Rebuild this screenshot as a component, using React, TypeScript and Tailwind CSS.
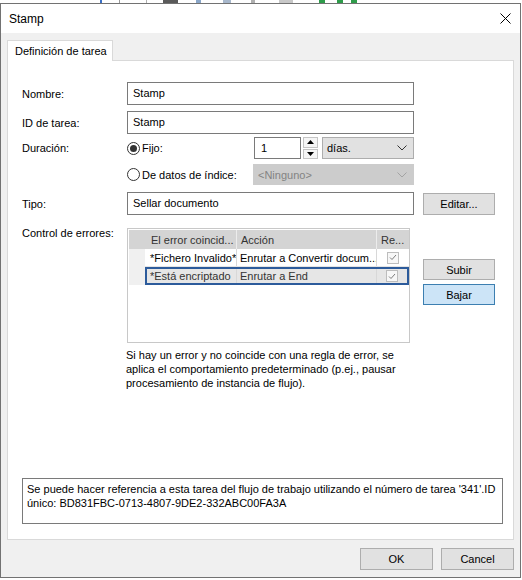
import React from 'react';

const ui = "font-['Liberation_Sans',Arial,sans-serif] text-[11px] leading-[14px] text-black whitespace-nowrap";

const Chevron = ({ color = '#333' }: { color?: string }) => (
  <svg width="10" height="6" viewBox="0 0 10 6">
    <path d="M0.5 0.5 L5 5 L9.5 0.5" fill="none" stroke={color} strokeWidth="1" />
  </svg>
);

const Radio = ({ checked, label }: { checked?: boolean; label: string }) => (
  <div className="flex items-center">
    <span className="flex h-[13px] w-[13px] items-center justify-center rounded-full border border-[#333] bg-white">
      {checked && <span className="h-[7px] w-[7px] rounded-full bg-[#333]" />}
    </span>
    <span className="ml-[2px]">{label}</span>
  </div>
);

const TextBox = ({ value, className = '' }: { value: string; className?: string }) => (
  <div className={`flex h-[23px] items-center border border-[#7a7a7a] bg-white px-[5px] pb-[1px] ${className}`}>{value}</div>
);

const WinButton = ({ label, active, className = '' }: { label: string; active?: boolean; className?: string }) => (
  <div
    className={`flex items-center justify-center border ${
      active ? 'border-[#3c7fb1] bg-[#cce4f7]' : 'border-[#adadad] bg-[#e1e1e1]'
    } ${className}`}
  >
    {label}
  </div>
);

const Check = () => (
  <span className="flex h-[12px] w-[12px] items-center justify-center border border-[#bdbdbd] bg-[#f7f7f7]">
    <svg width="8" height="7" viewBox="0 0 8 7">
      <path d="M1 3.5 L3 5.5 L7 1" fill="none" stroke="#7d7d7d" strokeWidth="1" />
    </svg>
  </span>
);

type ErrorRule = { match: string; action: string; selected?: boolean };

const rules: ErrorRule[] = [
  { match: '*Fichero Invalido*', action: 'Enrutar a Convertir docum...' },
  { match: '*Está encriptado', action: 'Enrutar a End', selected: true },
];

const ErrorGrid = () => (
  <div className="h-[115px] w-[283px] border border-[#c8c8c8] bg-white pl-[1px] pt-[1px]">
    <div className="flex h-[19px] bg-[#d4d4d4] text-[#333]">
      <div className="w-[16px]" />
      <div className="flex w-[92px] items-center border-r border-[#ececec] pl-[6px]">El error coincid...</div>
      <div className="flex w-[140px] items-center border-r border-[#ececec] pl-[4px]">Acción</div>
      <div className="flex flex-1 items-center pl-[4px]">Re...</div>
    </div>
    {rules.map((r) => (
      <div key={r.match} className="flex h-[18px]">
        <div className="w-[16px] bg-[#f0f0f0]" />
        <div
          className={`flex flex-1 ${
            r.selected ? 'border-2 border-[#2c5b9b] bg-[#e6e6e6] text-[#333]' : 'border-b border-[#e4e4e4] bg-white'
          }`}
        >
          <div
            className={`flex ${r.selected ? 'w-[90px] pl-[3px]' : 'w-[92px] pl-[5px]'} items-center overflow-hidden border-r border-[#d8d8d8]`}
          >
            {r.match}
          </div>
          <div className="flex w-[140px] items-center overflow-hidden border-r border-[#d8d8d8] pl-[3px]">
            {r.action}
          </div>
          <div className="flex flex-1 items-center justify-center">
            <Check />
          </div>
        </div>
      </div>
    ))}
  </div>
);

const App = () => {
  return (
    <div className={`h-[580px] w-[522px] overflow-hidden bg-white ${ui}`}>
      {/* strip of the app behind the dialog */}
      <div className="flex h-[3px] items-end">
        <span className="ml-[100px] h-[3px] w-[2px] bg-[#3a6fc4]" />
        <span className="ml-[17px] h-[3px] w-[1px] bg-[#9a9a9a]" />
        <span className="ml-[26px] h-[3px] w-[1px] bg-[#b0b0b0]" />
        <span className="ml-[16px] h-[3px] w-[15px] bg-[#5a5a5a]" />
        <span className="ml-[18px] h-[3px] w-[5px] bg-[#8aa6c8]" />
        <span className="ml-[22px] h-[3px] w-[8px] bg-[#a8b8cc]" />
        <span className="ml-[20px] h-[3px] w-[4px] bg-[#b0b0b0]" />
        <span className="ml-[24px] h-[3px] w-[14px] bg-[#c8c8c8]" />
        <span className="ml-[26px] h-[3px] w-[6px] bg-[#2e9c4a]" />
        <span className="ml-[12px] h-[3px] w-[6px] bg-[#2e9c4a]" />
        <span className="ml-[8px] h-[3px] w-[6px] bg-[#2e9c4a]" />
      </div>

      <div className="flex h-[575px] w-[521px] flex-col border border-[#727272]">
        {/* title bar */}
        <div className="flex h-[29px] items-center justify-between bg-white pl-[8px] pr-[9px] text-[12px]">
          <span>Stamp</span>
          <svg width="11" height="11" viewBox="0 0 11 11">
            <path d="M0.5 0.5 L10.5 10.5 M10.5 0.5 L0.5 10.5" stroke="#000" strokeWidth="1" />
          </svg>
        </div>

        <div className="flex flex-1 flex-col bg-[#f0f0f0] pl-[6px] pr-[6px] pt-[7px]">
          {/* tab header */}
          <div className="flex">
            <div className="relative z-10 -mb-[1px] flex h-[21px] w-[106px] items-center border border-b-0 border-[#d9d9d9] bg-white pl-[7px]">
              Definición de tarea
            </div>
          </div>

          {/* tab page */}
          <div className="flex h-[480px] w-[507px] flex-col border border-[#d9d9d9] bg-white pl-[14px]">
            <div className="mt-[21px] flex items-center">
              <span className="w-[105px]">Nombre:</span>
              <TextBox value="Stamp" className="w-[287px]" />
            </div>
            <div className="mt-[6px] flex items-center">
              <span className="w-[105px]">ID de tarea:</span>
              <TextBox value="Stamp" className="w-[287px]" />
            </div>

            <div className="mt-[3px] flex items-center">
              <span className="w-[105px]">Duración:</span>
              <div className="w-[127px]">
                <Radio checked label="Fijo:" />
              </div>
              <div className="flex h-[22px] w-[47px] items-center border border-[#7a7a7a] bg-white pl-[6px]">1</div>
              <div className="ml-[2px] flex h-[22px] w-[15px] flex-col gap-[1px]">
                <div className="flex h-[10.5px] items-center justify-center border border-[#c4c4c4] bg-[#f5f5f5]">
                  <svg width="7" height="4" viewBox="0 0 7 4">
                    <path d="M0 4 L3.5 0 L7 4 Z" fill="#000" />
                  </svg>
                </div>
                <div className="flex h-[10.5px] items-center justify-center border border-[#c4c4c4] bg-[#f5f5f5]">
                  <svg width="7" height="4" viewBox="0 0 7 4">
                    <path d="M0 0 L3.5 4 L7 0 Z" fill="#000" />
                  </svg>
                </div>
              </div>
              <div className="ml-[4px] flex h-[22px] w-[92px] items-center justify-between border border-[#adadad] bg-[#e1e1e1] pl-[4px] pr-[6px]">
                <span>días.</span>
                <Chevron />
              </div>
            </div>

            <div className="mt-[5px] flex items-center">
              <span className="w-[105px]" />
              <div className="w-[126px]">
                <Radio label="De datos de índice:" />
              </div>
              <div className="flex h-[21px] w-[161px] items-center justify-between border border-[#cccccc] bg-[#cccccc] pl-[4px] pr-[6px] text-[#838383]">
                <span>&lt;Ninguno&gt;</span>
                <Chevron color="#a3a3a3" />
              </div>
            </div>

            <div className="mt-[7px] flex items-center">
              <span className="w-[105px]">Tipo:</span>
              <TextBox value="Sellar documento" className="w-[287px]" />
              <WinButton label="Editar..." className="ml-[9px] h-[22px] w-[72px]" />
            </div>

            <div className="mt-[13px] flex items-start">
              <span className="-mt-[2px] w-[105px]">Control de errores:</span>
              <ErrorGrid />
              <div className="ml-[13px] flex flex-col pt-[31px]">
                <WinButton label="Subir" className="h-[21px] w-[72px]" />
                <WinButton label="Bajar" active className="mt-[4px] h-[21px] w-[72px]" />
              </div>
            </div>

            <p className="ml-[104px] mt-[5px]">
              Si hay un error y no coincide con una regla de error, se
              <br />
              aplica el comportamiento predeterminado (p.ej., pausar
              <br />
              procesamiento de instancia de flujo).
            </p>

            <div className="mb-[15px] mt-auto h-[46px] w-[481px] border border-[#7a7a7a] bg-white px-[4px] pt-[3px]">
              Se puede hacer referencia a esta tarea del flujo de trabajo utilizando el número de tarea '341'.ID
              <br />
              único: BD831FBC-0713-4807-9DE2-332ABC00FA3A
            </div>
          </div>

          {/* dialog buttons */}
          <div className="mt-[8px] flex justify-end gap-[8px]">
            <WinButton label="OK" className="h-[22px] w-[73px]" />
            <WinButton label="Cancel" className="h-[22px] w-[73px]" />
          </div>
        </div>
      </div>
    </div>
  );
};

export default App;
